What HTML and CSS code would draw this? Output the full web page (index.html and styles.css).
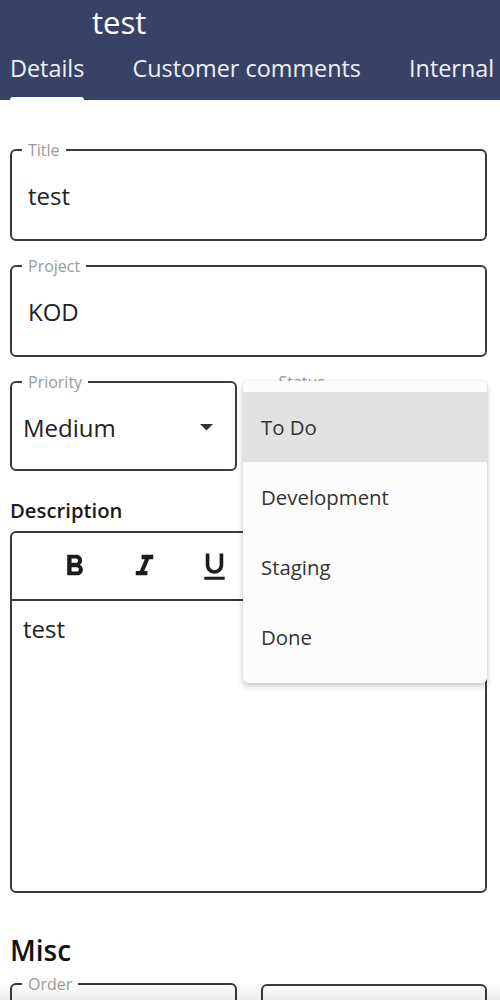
FILE: index.html
```html
<!DOCTYPE html>
<html>
<head>
<meta charset="utf-8">
<link rel="stylesheet" href="styles.css">
</head>
<body>
<header class="appbar">
  <div class="appbar-title">test</div>
  <nav class="tabs">
    <div class="tab tab-active">Details</div>
    <div class="tab">Customer comments</div>
    <div class="tab">Internal</div>
  </nav>
</header>
<main class="form">
  <fieldset class="field">
    <legend class="field-label">Title</legend>
    <div class="field-value">test</div>
  </fieldset>
  <fieldset class="field">
    <legend class="field-label">Project</legend>
    <div class="field-value">KOD</div>
  </fieldset>
  <div class="row row-select">
    <fieldset class="field field-select">
      <legend class="field-label">Priority</legend>
      <div class="field-value select-value">
        <span>Medium</span>
        <svg class="caret" width="13" height="7" viewBox="0 0 13 7"><polygon points="0,0 13,0 6.5,6.5" fill="#333"/></svg>
      </div>
    </fieldset>
    <fieldset class="field field-select">
      <legend class="field-label">Status</legend>
      <div class="field-value select-value"></div>
    </fieldset>
    <ul class="menu">
      <li class="menu-item menu-item-active">To Do</li>
      <li class="menu-item">Development</li>
      <li class="menu-item">Staging</li>
      <li class="menu-item">Done</li>
    </ul>
  </div>
  <div class="section-label">Description</div>
  <div class="editor">
    <div class="toolbar">
      <div class="tool">
        <svg width="35" height="35" viewBox="0 0 24 24"><path fill="#1c1c1c" d="M15.6 10.79c.97-.67 1.65-1.77 1.65-2.79 0-2.26-1.75-4-4-4H7v14h7.04c2.09 0 3.71-1.7 3.71-3.79 0-1.520-.86-2.820-2.150-3.42zM10 6.5h3c.83 0 1.5.67 1.5 1.5s-.67 1.5-1.5 1.5h-3v-3zm3.5 9H10v-3h3.5c.83 0 1.5.67 1.5 1.5s-.67 1.5-1.5 1.5z"/></svg>
      </div>
      <div class="tool">
        <svg width="35" height="35" viewBox="0 0 24 24"><path fill="#1c1c1c" d="M10 4v3h2.21l-3.42 8H6v3h8v-3h-2.21l3.42-8H18V4z"/></svg>
      </div>
      <div class="tool">
        <svg width="35" height="35" viewBox="0 0 24 24"><path fill="#1c1c1c" d="M12 17c3.31 0 6-2.690 6-6V3h-2.5v8c0 1.930-1.570 3.5-3.5 3.5S8.5 12.930 8.5 11V3H6v8c0 3.310 2.690 6 6 6zm-7 2v2h14v-2H5z"/></svg>
      </div>
    </div>
    <div class="editor-body">test</div>
  </div>
  <h2 class="section-title">Misc</h2>
  <div class="row">
    <fieldset class="field field-select">
      <legend class="field-label">Order</legend>
      <div class="field-value"></div>
    </fieldset>
    <fieldset class="field field-select field-nolegend">
      <div class="field-value"></div>
    </fieldset>
  </div>
</main>
<div class="bottom-shade"></div>
</body>
</html>
```
FILE: styles.css
```css
* { box-sizing: border-box; }
html, body {
  margin: 0;
  padding: 0;
  background: #ffffff;
  font-family: "Open Sans", "Noto Sans", sans-serif;
  color: #222;
  overflow: hidden;
}
.appbar {
  background: #374266;
  color: #fff;
  height: 100px;
  overflow: hidden;
}
.appbar-title {
  padding-left: 92px;
  padding-top: 2px;
  font-size: 31px;
  line-height: 40px;
  height: 42px;
}
.tabs {
  display: flex;
  gap: 48px;
  padding-left: 10px;
  height: 58px;
  white-space: nowrap;
}
.tab {
  position: relative;
  font-size: 23.4px;
  line-height: 30px;
  padding-top: 11px;
  color: #eef0f5;
}
.tab-active::after {
  content: "";
  position: absolute;
  left: 0;
  right: 0;
  bottom: 0;
  height: 3px;
  background: #fff;
  border-radius: 3px 3px 0 0;
}
.form {
  padding: 40px 13px 0 10px;
}
.field {
  margin: 0 0 15px 0;
  padding: 0 10px 7px;
  border: 2px solid #3a3a3a;
  border-radius: 6px;
  min-width: 0;
}
.field-label {
  padding: 0 6px;
  font-size: 16px;
  line-height: 20px;
  color: #9a9a9a;
}
.field-value {
  height: 71px;
  display: flex;
  align-items: center;
  padding-left: 6px;
  font-size: 24px;
  color: #222;
}
.field .field-value { margin-bottom: 1px; }
.row {
  display: grid;
  grid-template-columns: 1fr 1fr;
  gap: 24px;
  position: relative;
}
.row .field { margin-bottom: 0; }
.field-select { padding-bottom: 5px; }
.select-value {
  padding-left: 1px;
  justify-content: space-between;
}
.caret { margin-right: 12px; }
.field-nolegend { margin-top: 10px; }
.menu {
  position: absolute;
  top: 9px;
  left: 233px;
  width: 244px;
  margin: 0;
  padding: 11px 0;
  list-style: none;
  background: #fcfcfc;
  border-radius: 5px;
  box-shadow: 0 3px 6px rgba(0,0,0,0.22), 0 0 2px rgba(0,0,0,0.08);
}
.menu-item {
  height: 70px;
  display: flex;
  align-items: center;
  padding-left: 18px;
  font-size: 20.4px;
  color: #333;
}
.menu-item-active { background: #e2e2e2; }
.section-label {
  margin-top: 25px;
  margin-bottom: 7px;
  font-size: 20.3px;
  line-height: 28px;
  font-weight: 600;
  color: #1c1c1c;
}
.editor {
  border: 2px solid #3a3a3a;
  border-radius: 6px;
}
.toolbar {
  display: flex;
  height: 68px;
  padding-left: 27px;
  border-bottom: 2px solid #3a3a3a;
}
.tool {
  width: 70px;
  display: flex;
  align-items: center;
  justify-content: center;
}
.editor-body {
  height: 290px;
  padding: 13px 11px 15px;
  font-size: 24px;
  line-height: 30px;
}
.section-title {
  margin: 38px 0 5px;
  font-size: 28px;
  line-height: 38px;
  font-weight: 600;
  color: #111;
}
.bottom-shade {
  position: fixed;
  left: 0;
  right: 0;
  bottom: 0;
  height: 18px;
  background: linear-gradient(to bottom, rgba(0,0,0,0), rgba(0,0,0,0.07));
  pointer-events: none;
}
```
